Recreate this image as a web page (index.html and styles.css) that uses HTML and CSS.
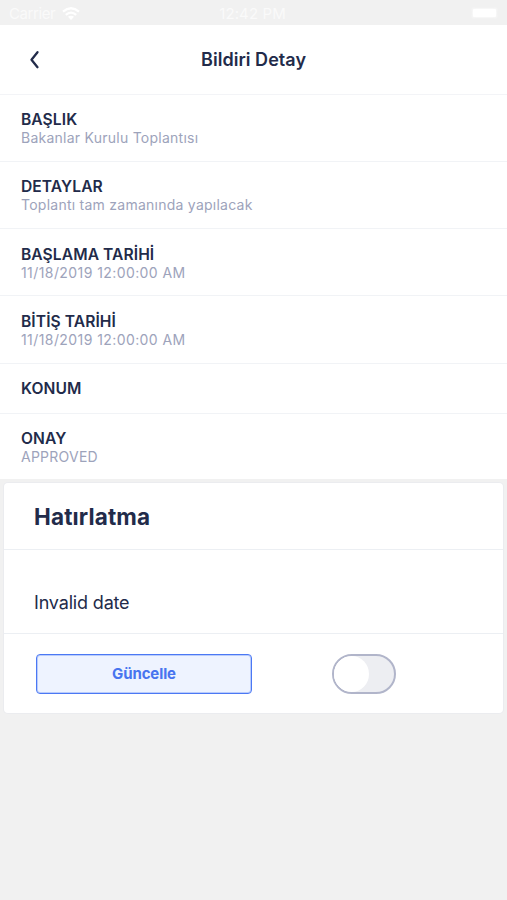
FILE: index.html
```html
<!DOCTYPE html>
<html lang="tr">
<head>
<meta charset="utf-8">
<title>Bildiri Detay</title>
<link rel="stylesheet" href="styles.css">
</head>
<body>
<div class="status">
  <div class="carrier"><span>Carrier</span>
    <svg width="18" height="13" viewBox="0 0 18 13"><path d="M9 13 L6 9.8 Q9 7.6 12 9.8Z" fill="#fff"/><path d="M1 4.6 Q9 -2 17 4.6 M3.8 7.8 Q9 3.4 14.2 7.8" fill="none" stroke="#fff" stroke-width="2.3"/></svg>
  </div>
  <span class="clock">12:42 PM</span>
  <div class="power"><span class="battery"></span></div>
</div>
<header class="header">
  <svg class="back" width="12" height="20" viewBox="0 0 12 20"><path d="M9.5 2.2 L3.5 9.7 L9.5 17.2" fill="none" stroke="#222b4a" stroke-width="2.3" stroke-linecap="round" stroke-linejoin="round"/></svg>
  <h1>Bildiri Detay</h1>
</header>
<main>
  <section class="row"><h2>BAŞLIK</h2><p>Bakanlar Kurulu Toplantısı</p></section>
  <section class="row"><h2>DETAYLAR</h2><p>Toplantı tam zamanında yapılacak</p></section>
  <section class="row dated"><h2>BAŞLAMA TARİHİ</h2><p>11/18/2019 12:00:00 AM</p></section>
  <section class="row dated tall"><h2>BİTİŞ TARİHİ</h2><p>11/18/2019 12:00:00 AM</p></section>
  <section class="row short"><h2>KONUM</h2></section>
  <section class="row last"><h2>ONAY</h2><p>APPROVED</p></section>
  <article class="card">
    <h3>Hatırlatma</h3>
    <div class="card-body">Invalid date</div>
    <div class="card-footer">
      <button class="update">Güncelle</button>
      <span class="toggle"><span class="knob"></span></span>
    </div>
  </article>
</main>
</body>
</html>
```
FILE: styles.css
```css
* { box-sizing: border-box; margin: 0; padding: 0; }
body {
  min-height: 900px;
  background: #f1f1f1;
  color: #222b4a;
  font-family: Inter, "Noto Sans", sans-serif;
}
.status {
  display: grid;
  grid-template-columns: 1fr auto 1fr;
  align-items: center;
  height: 25px;
  padding: 3px 11px 0 9px;
  color: #fafafa;
  font-size: 15px;
  line-height: 20px;
}
.carrier { display: flex; align-items: center; gap: 7px; letter-spacing: -0.4px; }
.carrier svg { margin-top: -2px; }
.clock { letter-spacing: 0.1px; }
.power { display: flex; justify-content: flex-end; }
.battery { width: 23px; height: 8px; margin-top: -3px; background: #fff; border-radius: 1px; box-shadow: 0 0 2px 1px #f8f8f8; }
.header {
  display: grid;
  grid-template-columns: 70px 1fr 70px;
  align-items: center;
  height: 70px;
  background: #fff;
  border-bottom: 1px solid #f3f4f7;
}
.back { margin-left: 28px; }
h1 { font-size: 18px; line-height: 24px; font-weight: 600; letter-spacing: 0.04px; text-align: center; }
.row {
  height: 67px;
  padding: 15px 21px 0;
  background: #fff;
  border-bottom: 1px solid #f1f3f6;
}
.row.dated { padding-top: 16px; }
.row.tall { height: 68px; }
.row.short { height: 50px; }
.row.last { height: 65px; border-bottom: 0; }
h2 { margin-bottom: -1px; font-size: 15.6px; line-height: 20px; font-weight: 600; letter-spacing: 0.08px; }
.row p { font-size: 14px; line-height: 18px; color: #9da3bb; letter-spacing: 0.25px; }
.row.dated p { letter-spacing: 0.42px; }
.card {
  width: 499px;
  height: 230px;
  margin: 4px auto 0;
  background: #fff;
  border-radius: 4px;
  box-shadow: 0 0 0 1px #ebecef;
}
h3 {
  height: 67px;
  padding: 18px 30px 0;
  border-bottom: 1px solid #eceff3;
  font-size: 22.5px;
  line-height: 32px;
  font-weight: 700;
  letter-spacing: 0.15px;
}
.card-body {
  height: 84px;
  padding: 40px 30px 0;
  border-bottom: 1px solid #eceff3;
  font-size: 18px;
  line-height: 26px;
  letter-spacing: -0.17px;
}
.card-footer { display: flex; gap: 80px; padding: 20px 32px 0; }
.update {
  width: 216px;
  height: 40px;
  border: 1px solid #4b78f4;
  border-radius: 4px;
  background: #eef3ff;
  box-shadow: inset 0 0 0 1px #b9ccfb;
  color: #4874ef;
  font: 700 15px/20px Inter, sans-serif;
  letter-spacing: -0.12px;
}
.toggle {
  width: 64px;
  height: 40px;
  overflow: hidden;
  border: 2px solid #b1b5ca;
  border-radius: 20px;
  background: #edeef2;
}
.knob { display: block; width: 35px; height: 36px; border-radius: 50%; background: #fff; box-shadow: -9px 0 0 #fff; }
```
